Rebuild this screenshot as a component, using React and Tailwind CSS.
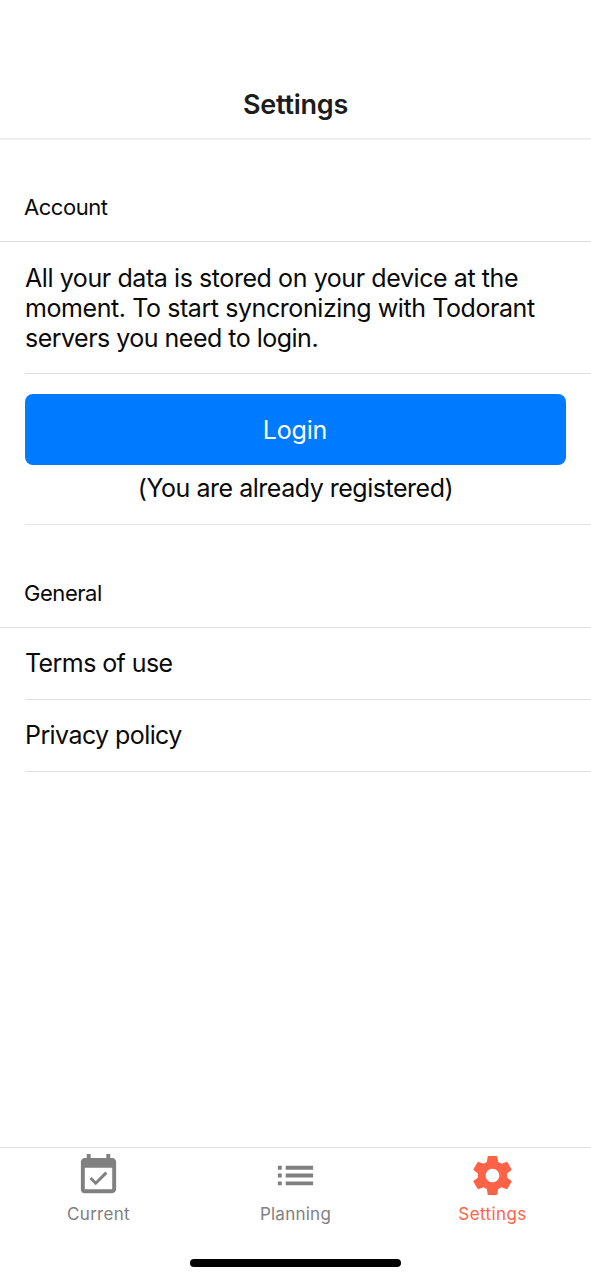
import { MdEventAvailable, MdList } from 'react-icons/md';

function GearIcon({ className }) {
  return (
    <svg className={className} viewBox="0 0 24 24" fill="currentColor">
      <path d="M19.43 12.98c.04-.32.07-.64.07-.98s-.03-.66-.07-.98l2.11-1.65c.19-.15.24-.42.12-.64l-2-3.46c-.12-.22-.39-.3-.61-.22l-2.49 1c-.52-.4-1.08-.73-1.69-.98l-.38-2.65C14.46 2.18 14.25 2 14 2h-4c-.25 0-.46.18-.49.42l-.38 2.65c-.61.25-1.17.59-1.69.98l-2.49-1c-.23-.09-.49 0-.61.22l-2 3.46c-.13.22-.07.49.12.64l2.11 1.65c-.04.32-.07.65-.07.98s.03.66.07.98l-2.11 1.65c-.19.15-.24.42-.12.64l2 3.46c.12.22.39.3.61.22l2.49-1c.52.4 1.08.73 1.69.98l.38 2.65c.03.24.24.42.49.42h4c.25 0 .46-.18.49-.42l.38-2.65c.61-.25 1.17-.59 1.69-.98l2.49 1c.23.09.49 0 .61-.22l2-3.46c.12-.22.07-.49-.12-.64l-2.11-1.65zM12 15.5c-1.93 0-3.5-1.57-3.5-3.5s1.57-3.5 3.5-3.5 3.5 1.57 3.5 3.5-1.57 3.5-3.5 3.5z" />
    </svg>
  );
}

const tabs = [
  { icon: MdEventAvailable, label: 'Current', tracking: 'tracking-[0.3px]' },
  { icon: MdList, label: 'Planning', tracking: 'tracking-[0.25px]' },
  { icon: GearIcon, label: 'Settings', tracking: 'tracking-[0.4px]', active: true },
];

function SectionHeader({ children }) {
  return (
    <div className="h-[102px] pt-[51px] pl-6 border-b border-[#dedede]">
      <h2 className="text-[22px] leading-[32px] tracking-[-0.45px]">{children}</h2>
    </div>
  );
}

function Row({ children }) {
  return (
    <div className="ml-[25px] h-[72px] flex items-center border-b border-[#dedede]">
      <span className="text-[25px] tracking-[-0.58px]">{children}</span>
    </div>
  );
}

export default function App() {
  return (
    <div className="w-full h-[1280px] flex flex-col bg-white text-[#0a0a0a] font-['Inter',sans-serif]">
      <header className="h-[140px] pt-[89px] text-center border-b-2 border-[#f0f0f0]">
        <h1 className="text-[27px] leading-[32px] font-semibold tracking-[-0.25px] text-[#1c1c1e]">Settings</h1>
      </header>

      <main className="flex-1">
        <SectionHeader>Account</SectionHeader>
        <div className="ml-[25px] h-[132px] pt-[21px] border-b border-[#dedede]">
          <p className="text-[25px] leading-[30px] tracking-[-0.42px] whitespace-nowrap">
            All your data is stored on your device at the
            <br />
            moment. To start syncronizing with Todorant
            <br />
            <span className="tracking-[-0.51px]">servers you need to login.</span>
          </p>
        </div>
        <div className="ml-[25px] h-[151px] pt-5 border-b border-[#e4e4e4]">
          <div className="w-[541px]">
            <button className="block w-full h-[71px] pt-[2px] pr-px rounded-[8px] bg-[#007aff] text-[25px] tracking-[-0.2px] text-white">
              Login
            </button>
            <p className="mt-[7px] text-center text-[25px] leading-[32px] tracking-[-0.48px]">(You are already registered)</p>
          </div>
        </div>

        <div className="pt-px">
          <SectionHeader>General</SectionHeader>
        </div>
        <Row>Terms of use</Row>
        <Row>Privacy policy</Row>
      </main>

      <nav className="h-[133px] border-t border-[#dedede] flex flex-col">
        <div className="flex h-[111px]">
          {tabs.map(({ icon: Icon, label, tracking, active }) => (
            <a
              key={label}
              href="#"
              className={`flex-1 flex flex-col items-center pt-[4px] ${active ? 'text-[#ff6347]' : 'text-[#808080]'}`}
            >
              <Icon className="size-[47px]" />
              <span className={`mt-[3px] text-[17px] leading-[24px] ${tracking}`}>{label}</span>
            </a>
          ))}
        </div>
        <div className="mx-auto w-[211px] h-[8px] rounded-full bg-black" />
      </nav>
    </div>
  );
}
